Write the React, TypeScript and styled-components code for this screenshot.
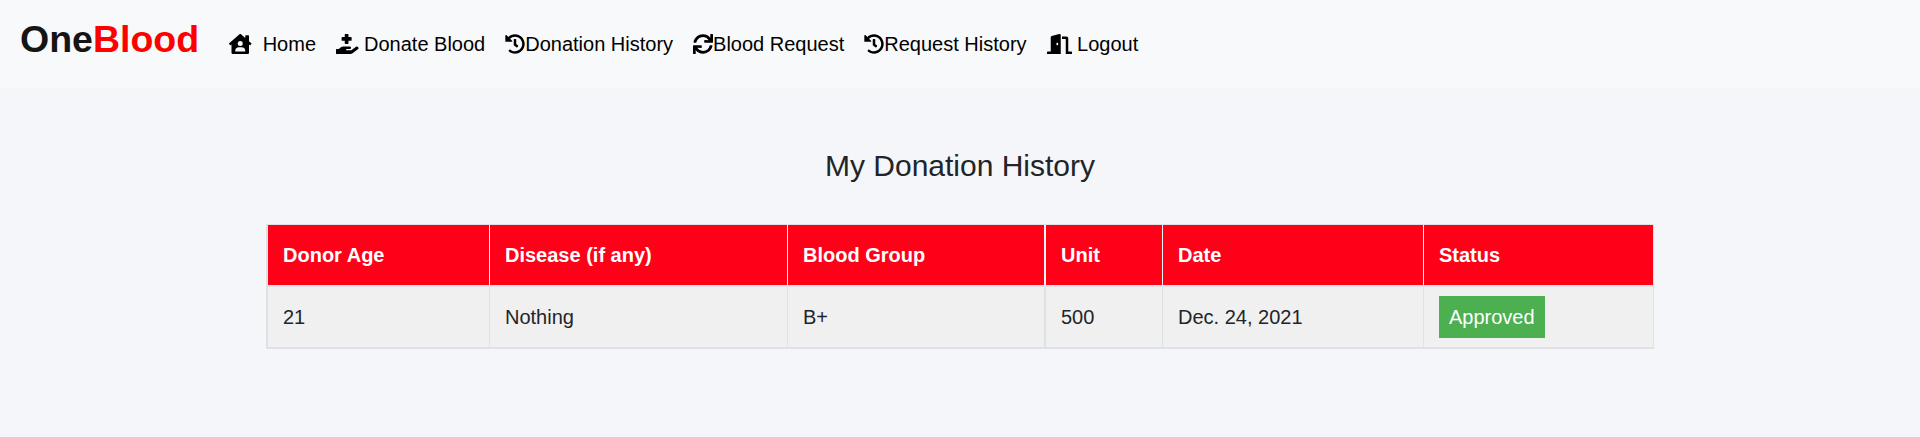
import React from "react";
import styled, { createGlobalStyle } from "styled-components";
import { FaHouseUser, FaHandHoldingMedical, FaHistory, FaSync, FaDoorOpen } from "react-icons/fa";

const Global = createGlobalStyle`
  html, body { margin: 0; padding: 0; }
  body {
    background: #f4f6f9;
    color: #212529;
    font-family: "Liberation Sans", Arial, sans-serif;
    font-size: 16px;
    line-height: 1.5;
  }
`;

const Page = styled.div`
  min-height: 437px;
`;

const NavBar = styled.nav`
  display: flex;
  align-items: flex-start;
  height: 88px;
  box-sizing: border-box;
  padding: 12px 16px 0 20px;
  background: #f8f9fa;
`;

const Brand = styled.a`
  font-size: 37.5px;
  font-weight: 700;
  line-height: 54px;
  color: #151515;
  margin-right: 30px;
`;

const BrandAccent = styled.span`
  color: #ff0000;
`;

const NavList = styled.div`
  display: flex;
  gap: 20px;
  padding-top: 17px;
`;

const NavLink = styled.a<{ $gap: number; $icon: number }>`
  display: flex;
  align-items: center;
  gap: ${(p) => p.$gap}px;
  font-size: 20px;
  line-height: 30px;
  color: #000;
  svg { flex: none; width: ${(p) => p.$icon}px; height: 20px; }
`;

const Main = styled.main`
  padding-top: 60px;
`;

const Title = styled.h3`
  margin: 0 0 40px;
  text-align: center;
  font-size: 30px;
  font-weight: 400;
  line-height: 36px;
`;

const Table = styled.table`
  width: 1388px;
  margin: 0 0 0 266px;
  border-collapse: separate;
  border-spacing: 0;
  table-layout: fixed;
  box-sizing: border-box;
  border-style: solid;
  border-color: #dee2e6;
  border-width: 1px 1px 2px 2px;
`;

const HeadCell = styled.th<{ $line: number }>`
  padding: 15px;
  background: #ff0019;
  color: #fff;
  font-size: 20px;
  font-weight: 700;
  line-height: 30px;
  text-align: left;
  border-bottom: 2px solid #dee2e6;
  border-right: ${(p) => p.$line}px solid #f4f4f4;
`;

const BodyCell = styled.td<{ $line: number }>`
  padding: 0 15px;
  height: 60px;
  background: #f0f0f0;
  font-size: 20px;
  line-height: 30px;
  border-right: ${(p) => p.$line}px solid #dee2e6;
`;

const Badge = styled.span`
  display: inline-block;
  vertical-align: middle;
  padding: 6px 10px;
  background: #4caf50;
  color: #fff;
  font-size: 20px;
  line-height: 30px;
`;

const links = [
  { label: "Home", Icon: FaHouseUser, gap: 11, icon: 22.5 },
  { label: "Donate Blood", Icon: FaHandHoldingMedical, gap: 5.5, icon: 22.5 },
  { label: "Donation History", Icon: FaHistory, gap: 0, icon: 20 },
  { label: "Blood Request", Icon: FaSync, gap: 0, icon: 20 },
  { label: "Request History", Icon: FaHistory, gap: 0, icon: 20 },
  { label: "Logout", Icon: FaDoorOpen, gap: 5.5, icon: 25 },
];

const columns = [
  { label: "Donor Age", width: 222, line: 1 },
  { label: "Disease (if any)", width: 298, line: 1 },
  { label: "Blood Group", width: 258, line: 2 },
  { label: "Unit", width: 117, line: 1 },
  { label: "Date", width: 261, line: 1 },
  { label: "Status", width: 229, line: 0 },
];

const row = ["21", "Nothing", "B+", "500", "Dec. 24, 2021"];

export default function App() {
  return (
    <Page>
      <Global />
      <NavBar>
        <Brand>
          One<BrandAccent>Blood</BrandAccent>
        </Brand>
        <NavList>
          {links.map(({ label, Icon, gap, icon }) => (
            <NavLink key={label} $gap={gap} $icon={icon}>
              <Icon />
              {label}
            </NavLink>
          ))}
        </NavList>
      </NavBar>
      <Main>
        <Title>My Donation History</Title>
        <Table>
          <colgroup>
            {columns.map((c) => (
              <col key={c.label} width={c.width} />
            ))}
          </colgroup>
          <thead>
            <tr>
              {columns.map((c) => (
                <HeadCell key={c.label} $line={c.line}>{c.label}</HeadCell>
              ))}
            </tr>
          </thead>
          <tbody>
            <tr>
              {row.map((value, i) => (
                <BodyCell key={value} $line={columns[i].line}>{value}</BodyCell>
              ))}
              <BodyCell $line={0}>
                <Badge>Approved</Badge>
              </BodyCell>
            </tr>
          </tbody>
        </Table>
      </Main>
    </Page>
  );
}
